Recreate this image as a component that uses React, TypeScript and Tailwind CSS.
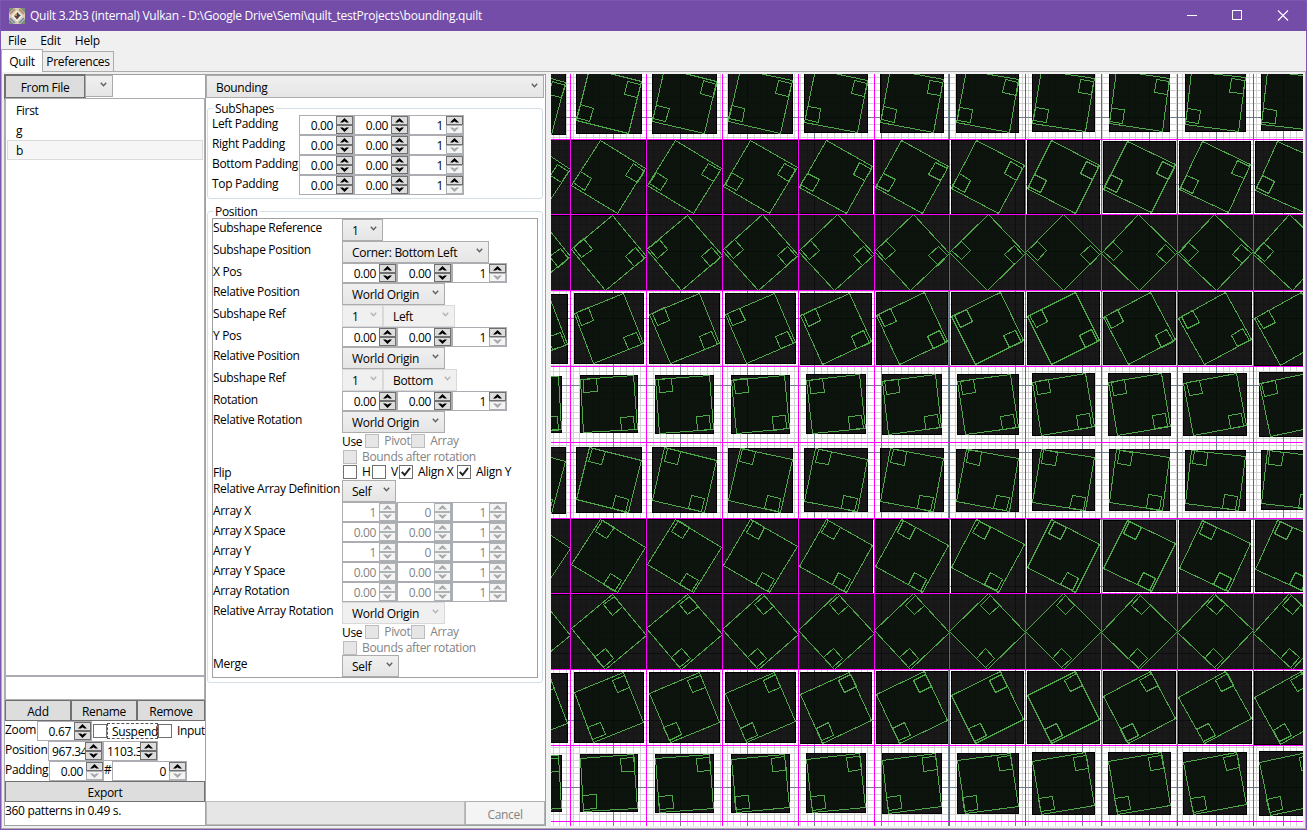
import React from "react";

const VX = [570, 646, 722, 798, 874, 949, 1025, 1101, 1177, 1253];
const HY = [139, 214, 290, 366, 442, 518, 593, 669, 745, 821];
const OX = 551;
const OY = 74;
const SIZE = 752;
const HALF = 26.8;
const CELL = 75.8;

function rotate(x: number, y: number, deg: number): [number, number] {
  const a = (deg * Math.PI) / 180;
  return [x * Math.cos(a) - y * Math.sin(a), x * Math.sin(a) + y * Math.cos(a)];
}

function poly(pts: number[][], deg: number, cx: number, cy: number) {
  return pts
    .map(([x, y]) => {
      const [rx, ry] = rotate(x, y, deg);
      return `${Math.floor(cx + rx) + 0.5},${Math.floor(cy + ry) + 0.5}`;
    })
    .join(" ");
}

const OUTER = [[-HALF, -HALF], [HALF, -HALF], [HALF, HALF], [-HALF, HALF]];
const LOWER = [[-HALF, 10.7], [-13.4, 10.7], [-13.4, 24.1], [-HALF, 24.1]];
const UPPER = [[13.4, -24.1], [HALF, -24.1], [HALF, -10.7], [13.4, -10.7]];

function Tile({ col, row }: { col: number; row: number }) {
  const deg = 14.4 + 18 * row - 0.9 * (col - 1);
  const cx = 608.8 + CELL * (col - 1) - OX;
  const cy = 101.2 + CELL * row - OY;
  const r = ((deg % 90) * Math.PI) / 180;
  const h = HALF * (Math.cos(r) + Math.sin(r));
  const x0 = Math.floor(cx - h);
  const x1 = Math.floor(cx + h) + 1;
  const y0 = Math.floor(cy - h);
  const y1 = Math.floor(cy + h) + 1;
  return (
    <g>
      <rect x={x0} y={y0} width={x1 - x0} height={y1 - y0} fill="#000" fillOpacity={0.9} />
      <rect x={x0 + 0.5} y={y0 + 0.5} width={x1 - x0 - 1} height={y1 - y0 - 1} fill="none" stroke="#000" />
      <polygon points={poly(OUTER, deg, cx, cy)} fill="#021002" fillOpacity={0.5} stroke="#4fa64b" />
      <polygon points={poly(LOWER, deg, cx, cy)} fill="none" stroke="#4fa64b" />
      <polygon points={poly(UPPER, deg, cx, cy)} fill="none" stroke="#4fa64b" />
    </g>
  );
}

function PatternCanvas() {
  const grid = [];
  for (let k = -10; k < 105; k++) {
    const gx = Math.floor(613.3 + 6.7 * k) - OX;
    const gy = Math.floor(117.3 + 6.7 * k) - OY;
    const major = k % 10 === 0;
    if (!major) {
      grid.push(<rect key={"x" + k} x={gx} y={0} width={1} height={SIZE} fill="#d3d3d3" />);
      grid.push(<rect key={"y" + k} x={0} y={gy} width={SIZE} height={1} fill="#d3d3d3" />);
    }
  }
  for (let k = -10; k < 110; k += 10) {
    grid.push(<rect key={"X" + k} x={Math.floor(613.3 + 6.7 * k) - OX} y={0} width={1} height={SIZE} fill="#708090" />);
    grid.push(<rect key={"Y" + k} x={0} y={Math.floor(117.3 + 6.7 * k) - OY} width={SIZE} height={1} fill="#708090" />);
  }
  const tiles = [];
  for (let row = 0; row < 10; row++)
    for (let col = 0; col < 11; col++) tiles.push(<Tile key={row + "-" + col} col={col} row={row} />);
  return (
    <svg width={SIZE} height={SIZE} shapeRendering="crispEdges" className="block shrink-0 bg-white">
      {grid}
      {tiles}
      {VX.map((x) => <rect key={x} x={x - OX} y={0} width={1} height={SIZE} fill="#f0f" />)}
      {HY.map((y) => <rect key={y} x={0} y={y - OY} width={SIZE} height={1} fill="#f0f" />)}
    </svg>
  );
}

function SpinButton({ up, off }: { up?: boolean; off?: boolean }) {
  return (
    <span className={`flex h-[9px] w-[17px] items-center justify-center border ${off ? "border-[#adb2b5] bg-[#f4f4f4]" : "border-[#707070] bg-[#dddddd]"}`}>
      <svg width="9" height="5" viewBox="0 0 9 5">
        <path d={up ? "M4.5 0L9 4.5H6.2L4.5 3.2L2.800 4.5H0Z" : "M4.5 5L9 .5H6.2L4.5 1.800L2.800 .5H0Z"} fill={off ? "#a8a8a8" : "#000"} />
      </svg>
    </span>
  );
}

type SpinProps = { v: string; state?: "on" | "min" | "off"; wide?: boolean; left?: boolean };
function Spin({ v, state = "on", wide, left }: SpinProps) {
  return (
    <span className={`flex h-[20px] shrink-0 border border-[#abadb3] bg-white ${wide ? "w-[75px]" : "w-[55px]"}`}>
      <span className={`h-[18px] min-w-0 flex-1 overflow-hidden pt-px leading-[18px] whitespace-nowrap tracking-[-0.35px] ${left ? "pl-[3px]" : "pr-[3px] text-right"} ${state === "off" ? "text-[#838383]" : ""}`}>{v}</span>
      <span className="flex w-[17px] shrink-0 flex-col">
        <SpinButton up off={state === "off"} />
        <SpinButton off={state !== "on"} />
      </span>
    </span>
  );
}

function Triple({ a = "0.00", b = "0.00", off }: { a?: string; b?: string; off?: boolean }) {
  return (
    <span className="flex">
      <Spin v={a} state={off ? "off" : "on"} />
      <Spin v={b} state={off ? "off" : "on"} />
      <Spin v="1" state={off ? "off" : "min"} />
    </span>
  );
}

function Chevron({ off }: { off?: boolean }) {
  return (
    <svg width="7" height="5" viewBox="0 0 7 5" className="mb-[3px] shrink-0">
      <path d="M.8 .8L3.5 3.7L6.2 .8" fill="none" stroke={off ? "#b4b4b4" : "#606060"} strokeWidth="1.4" />
    </svg>
  );
}

function Combo({ text, w, off, h = "h-[22px]" }: { text: string; w: string; off?: boolean; h?: string }) {
  return (
    <span className={`flex shrink-0 items-center justify-between border pr-[5px] pl-[9px] ${h} ${w} ${off ? "border-[#d9d9d9] bg-[#f0f0f0]" : "border-[#acacac] bg-gradient-to-b from-[#f0f0f0] to-[#e5e5e5]"}`}>
      <span className="pt-[2px] whitespace-nowrap">{text}</span>
      <Chevron off={off} />
    </span>
  );
}

function Check({ on, off }: { on?: boolean; off?: boolean }) {
  return (
    <span className={`flex h-[14px] w-[14px] shrink-0 items-center justify-center border ${off ? "border-[#bcbcbc] bg-[#e6e6e6]" : "border-[#707070] bg-white"}`}>
      {on && (
        <svg width="12" height="12" viewBox="0 0 12 12">
          <path d="M1.8 5.8L4.6 9L10 2" fill="none" stroke="#212121" strokeWidth="2" />
        </svg>
      )}
    </span>
  );
}

function Row({ label, h = "h-[22px]", children, lw = "w-[129px]" }: { label?: string; h?: string; children: React.ReactNode; lw?: string }) {
  return (
    <div className={`flex ${h}`}>
      <span className={`shrink-0 leading-[18px] whitespace-nowrap ${lw}`}>{label}</span>
      {children}
    </div>
  );
}

function PivotRows() {
  return (
    <>
      <Row h="h-[16px]">
        <span className="pt-px leading-[16px]">Use</span>
        <span className="ml-[3px] flex pt-px leading-[14px] text-[#838383]">
          <Check off /><span className="w-[32px] pl-[5px]">Pivot</span>
          <Check off /><span className="pl-[5px]">Array</span>
        </span>
      </Row>
      <Row h="h-[15px]">
        <span className="flex pt-px pl-px leading-[14px] whitespace-nowrap text-[#838383]"><Check off /><span className="pl-[5px]">Bounds after rotation</span></span>
      </Row>
    </>
  );
}

function Btn({ children, className = "" }: { children: React.ReactNode; className?: string }) {
  return <button className={`flex items-center justify-center border border-[#707070] bg-[#dddddd] pt-[2px] ${className}`}>{children}</button>;
}

function LeftPanel() {
  return (
    <div className="flex w-[201px] flex-col border-l border-[#abadb3] bg-white">
      <div className="flex h-[23px] shrink-0">
        <Btn className="h-[23px] w-[80px] outline outline-[0.5px] outline-[#707070]">From File</Btn>
        <span className="flex h-[22px] w-[28px] items-center justify-end border border-[#acacac] bg-gradient-to-b from-[#f0f0f0] to-[#e5e5e5] pr-[5px]"><Chevron /></span>
      </div>
      <div className="h-[578px] shrink-0 border border-[#abadb3] px-px pt-[2px]">
        <div className="h-[20px] pl-[9px] leading-[19px]">First</div>
        <div className="h-[19px] pl-[9px] leading-[20px]">g</div>
        <div className="h-[20px] border border-[#dadada] bg-[#f6f6f6] pl-[8px] leading-[20px]">b</div>
      </div>
      <div className="h-[24px] shrink-0 border border-[#abadb3]" />
      <div className="flex h-[21px] shrink-0">
        <Btn className="w-[66px]">Add</Btn>
        <Btn className="w-[66px]">Rename</Btn>
        <Btn className="w-[68px]">Remove</Btn>
      </div>
      <div className="flex h-[20px] shrink-0">
        <span className="w-[32px] leading-[18px]">Zoom</span>
        <Spin v="0.67" />
        <span className="flex items-center pl-px leading-[16px]">
          <Check />
          <span className="h-[16px] w-[51px] border border-dashed border-[#555] pl-[4px] leading-[15px]">Suspend</span>
          <Check />
          <span className="pl-[5px]">Input</span>
        </span>
      </div>
      <div className="flex h-[20px] shrink-0">
        <span className="w-[43px] leading-[18px]">Position</span>
        <Spin v="967.34" left />
        <Spin v="1103.3" left />
      </div>
      <div className="flex h-[20px] shrink-0">
        <span className="w-[44px] leading-[18px]">Padding</span>
        <Spin v="0.00" state="min" />
        <span className="w-[8px] leading-[18px]">#</span>
        <Spin v="0" state="min" wide />
      </div>
      <Btn className="h-[21px] w-[200px] shrink-0">Export</Btn>
      <div className="leading-[18px]">360 patterns in 0.49 s.</div>
    </div>
  );
}

function Group({ title, h, children }: { title: string; h: string; children: React.ReactNode }) {
  return (
    <fieldset className={`mr-[2px] ml-px rounded-[3px] border border-[#d5dfe5] ${h}`}>
      <legend className="ml-[5px] h-[16px] px-[2px] leading-[17px]">{title}</legend>
      {children}
    </fieldset>
  );
}

function MiddlePanel() {
  return (
    <div className="flex w-[341px] flex-col border-x border-[#a0a0a0] bg-white">
      <div className="flex h-[23px] shrink-0"><Combo text="Bounding" w="w-[338px]" h="h-[23px]" /></div>
      <div className="h-[703px] shrink-0 pt-[2px]">
        <Group title="SubShapes" h="h-[99px]">
          <div className="-mt-px pl-[4px]">
            {["Left Padding", "Right Padding", "Bottom Padding", "Top Padding"].map((l) => (
              <Row key={l} label={l} h="h-[20px]" lw="w-[87px]"><Triple /></Row>
            ))}
          </div>
        </Group>
        <div className="h-[4px]" />
        <Group title="Position" h="h-[480px]">
          <div className="-mt-px mr-[4px] ml-[4px] h-[460px] border border-[#a0a0a0]">
            <Row label="Subshape Reference"><Combo text="1" w="w-[41px]" /></Row>
            <Row label="Subshape Position"><Combo text="Corner: Bottom Left" w="w-[147px]" /></Row>
            <Row label="X Pos" h="h-[20px]"><Triple /></Row>
            <Row label="Relative Position"><Combo text="World Origin" w="w-[103px]" /></Row>
            <Row label="Subshape Ref"><Combo off text="1" w="w-[41px]" /><Combo off text="Left" w="w-[72px]" /></Row>
            <Row label="Y Pos" h="h-[20px]"><Triple /></Row>
            <Row label="Relative Position"><Combo text="World Origin" w="w-[103px]" /></Row>
            <Row label="Subshape Ref"><Combo off text="1" w="w-[41px]" /><Combo off text="Bottom" w="w-[74px]" /></Row>
            <Row label="Rotation" h="h-[20px]"><Triple /></Row>
            <Row label="Relative Rotation"><Combo text="World Origin" w="w-[103px]" /></Row>
            <PivotRows />
            <Row label="Flip" h="h-[16px]">
              <span className="flex items-start pt-px pl-px leading-[14px]">
                <Check /><span className="w-[15px] pl-[5px]">H</span>
                <Check /><span className="w-[13px] pl-[5px]">V</span>
                <Check on /><span className="w-[44px] pl-[5px] whitespace-nowrap">Align X</span>
                <Check on /><span className="pl-[5px] whitespace-nowrap">Align Y</span>
              </span>
            </Row>
            <Row label="Relative Array Definition"><Combo text="Self" w="w-[54px]" /></Row>
            <Row label="Array X" h="h-[20px]"><Triple a="1" b="0" off /></Row>
            <Row label="Array X Space" h="h-[20px]"><Triple off /></Row>
            <Row label="Array Y" h="h-[20px]"><Triple a="1" b="0" off /></Row>
            <Row label="Array Y Space" h="h-[20px]"><Triple off /></Row>
            <Row label="Array Rotation" h="h-[20px]"><Triple off /></Row>
            <Row label="Relative Array Rotation"><Combo off text="World Origin" w="w-[103px]" /></Row>
            <PivotRows />
            <Row label="Merge"><Combo text="Self" w="w-[57px]" /></Row>
          </div>
        </Group>
      </div>
      <div className="flex h-[24px] shrink-0">
        <div className="w-[259px] border border-[#bcbcbc] bg-[#e6e6e6]" />
        <div className="flex flex-1 items-center justify-center border border-[#adb2b5] bg-[#f4f4f4] pt-[4px] text-[#838383]">Cancel</div>
      </div>
    </div>
  );
}

function Logo() {
  return (
    <svg width="16" height="16" viewBox="0 0 16 16" className="mr-[5px] ml-[8px]">
      <rect width="16" height="16" fill="#d9cdb8" />
      <path d="M0 0H5L0 5ZM16 0V5L11 0ZM0 16V11L5 16ZM16 16H11L16 11Z" fill="#7d8f78" />
      <path d="M1 6L6 1M10 1L15 6" stroke="#b3835c" strokeWidth="1.5" />
      <path d="M1 10L6 15M10 15L15 10" stroke="#6b86a8" strokeWidth="1.5" />
      <path d="M8 2.500L13.500 8L8 13.500L2.500 8Z" fill="#f4eee0" />
      <path d="M8 4L12 8H8Z" fill="#39455f" />
      <path d="M4.5 8H8V4.5Z" fill="#b98a62" />
      <path d="M5 8H11L8 11.5Z" fill="#5a3f4a" />
    </svg>
  );
}

export default function App() {
  return (
    <div className="flex h-[830px] w-[1307px] flex-col overflow-hidden border border-[#7c56b0] bg-[#f0f0f0] font-['Open_Sans','Noto_Sans',sans-serif] text-[12px] tracking-[-0.32px] text-black">
      <div className="flex h-[30px] shrink-0 items-center bg-[#744da9] text-white">
        <Logo />
        <span className="tracking-[-0.24px] whitespace-nowrap">Quilt 3.2b3 (internal) Vulkan - D:\Google Drive\Semi\quilt_testProjects\bounding.quilt</span>
        <svg width="138" height="30" className="ml-auto" fill="none" stroke="#fff" shapeRendering="crispEdges">
          <path d="M19 14.5H29M64.500 9.500h9v9h-9z" />
          <path d="M110 9.500l10 10M120 9.500l-10 10" shapeRendering="auto" strokeWidth="1.1" />
        </svg>
      </div>
      <div className="flex h-[18px] shrink-0 gap-[14px] pl-[7px] leading-[20px] tracking-[-0.2px]">
        <span>File</span><span>Edit</span><span>Help</span>
      </div>
      <div className="flex h-[23px] shrink-0 items-end">
        <div className="z-10 h-[23px] w-[42px] border border-b-0 border-[#acacac] bg-white text-center leading-[23px]">Quilt</div>
        <div className="h-[21px] w-[71px] border border-l-0 border-[#acacac] bg-[#ededed] text-center leading-[20px]">Preferences</div>
        <div className="h-px flex-1 bg-[#acacac]" />
      </div>
      <div className="flex min-h-0 flex-1 border-x border-b border-[#acacac] pt-[2px] pl-[2px]">
        <div className="flex h-[752px] border-y border-[#a0a0a0]">
          <LeftPanel />
          <MiddlePanel />
        </div>
        <div className="w-[5px] shrink-0" />
        <PatternCanvas />
      </div>
    </div>
  );
}
